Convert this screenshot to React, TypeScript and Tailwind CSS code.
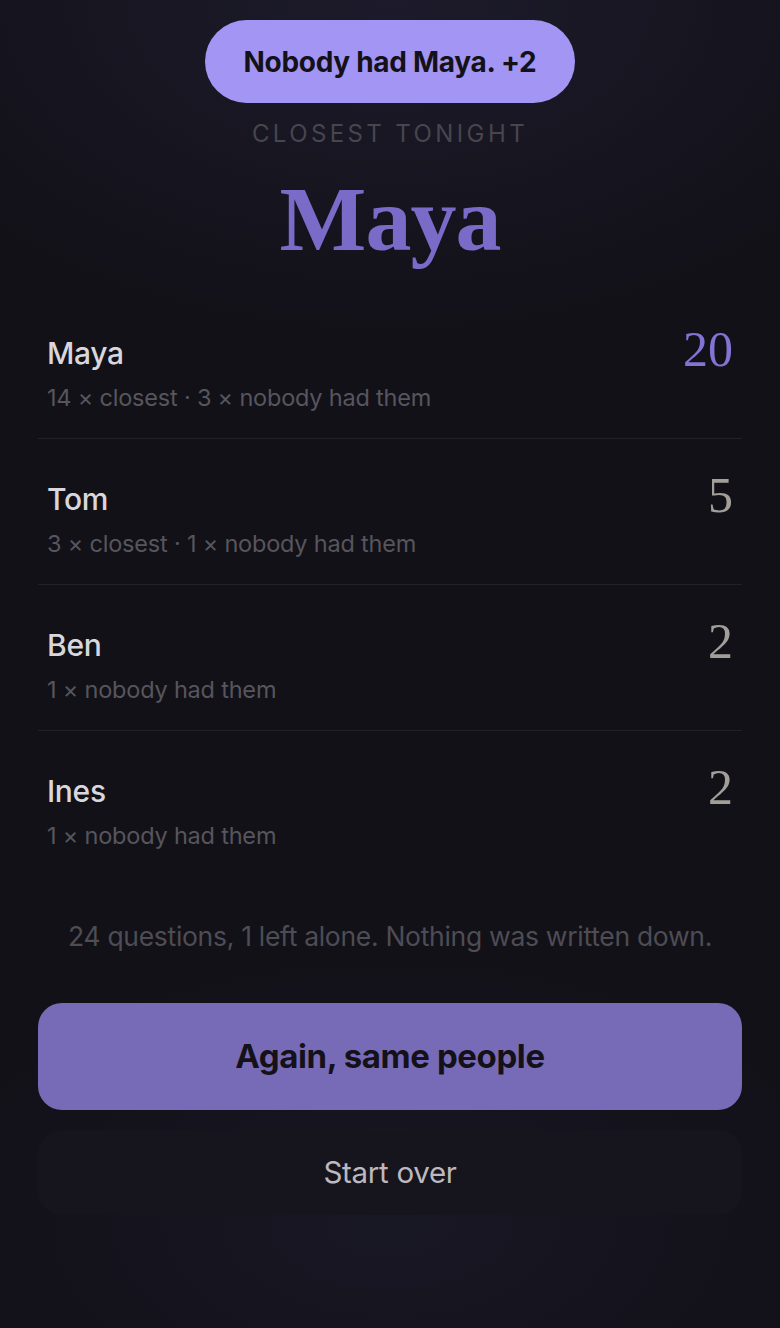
import React from "react";

const rows = [
  { name: "Maya", detail: "14 × closest · 3 × nobody had them", score: 20, top: true },
  { name: "Tom", detail: "3 × closest · 1 × nobody had them", score: 5 },
  { name: "Ben", detail: "1 × nobody had them", score: 2 },
  { name: "Ines", detail: "1 × nobody had them", score: 2 },
];

const sans = "font-['Inter','Liberation_Sans',sans-serif]";
const serif = "font-['Liberation_Serif','DejaVu_Serif',serif]";

export default function App() {
  return (
    <div
      className={`min-h-[1328px] w-full bg-[#121118] bg-[radial-gradient(ellipse_70%_25%_at_50%_0%,#1d1b2b_0%,transparent_100%),radial-gradient(ellipse_60%_20%_at_50%_92%,#181724_0%,transparent_100%)] ${sans} flex flex-col`}
    >
      <div className="px-[38px] flex flex-col">
        <div className="flex justify-center pt-[20px]">
          <div className="h-[83px] w-[370px] rounded-full bg-[#a395f4] flex items-center justify-center">
            <span className="text-[28px] font-bold text-[#141218] tracking-[-0.3px]">Nobody had Maya. +2</span>
          </div>
        </div>

        <div className="h-[58px] flex items-center justify-center pt-[4px]">
          <span className="text-[24px] tracking-[3.4px] text-[#47454d] uppercase">Closest tonight</span>
        </div>

        <div className="h-[132px] flex items-center justify-center pb-[16px]">
          <span className={`${serif} text-[92px] font-bold leading-none text-[#7a6bc8] tracking-[-1px]`}>Maya</span>
        </div>

        <ul className="flex flex-col">
          {rows.map((r, i) => (
            <li
              key={r.name}
              className={`h-[146px] px-[9px] flex justify-between ${i < rows.length - 1 ? "border-b border-[#22212a]" : ""}`}
            >
              <div className="flex flex-col pt-[40px]">
                <span className="text-[30px] leading-[40px] font-medium text-[#d9d7dc] tracking-[-0.3px]">{r.name}</span>
                <span className="text-[23.5px] leading-[32px] mt-[9px] text-[#57555d] tracking-[-0.2px]">{r.detail}</span>
              </div>
              <div className="pt-[30px]">
                <span
                  className={`${serif} text-[50px] leading-[52px] ${r.top ? "text-[#8373d3]" : "text-[#a29e99]"}`}
                >
                  {r.score}
                </span>
              </div>
            </li>
          ))}
        </ul>

        <p className="text-center text-[26.5px] leading-[36px] text-[#4e4c54] pt-[41px] tracking-[-0.3px]">
          24 questions, 1 left alone. Nothing was written down.
        </p>

        <button className="mt-[49px] h-[107px] w-full rounded-[24px] bg-[#776bb8] flex items-center justify-center">
          <span className="text-[33px] font-bold text-[#141218] tracking-[-0.4px]">Again, same people</span>
        </button>

        <button className="mt-[20px] h-[85px] w-full rounded-[24px] bg-[#16151e] flex items-center justify-center">
          <span className="text-[29.5px] text-[#bcb9bf] tracking-[-0.3px]">Start over</span>
        </button>
      </div>
    </div>
  );
}
